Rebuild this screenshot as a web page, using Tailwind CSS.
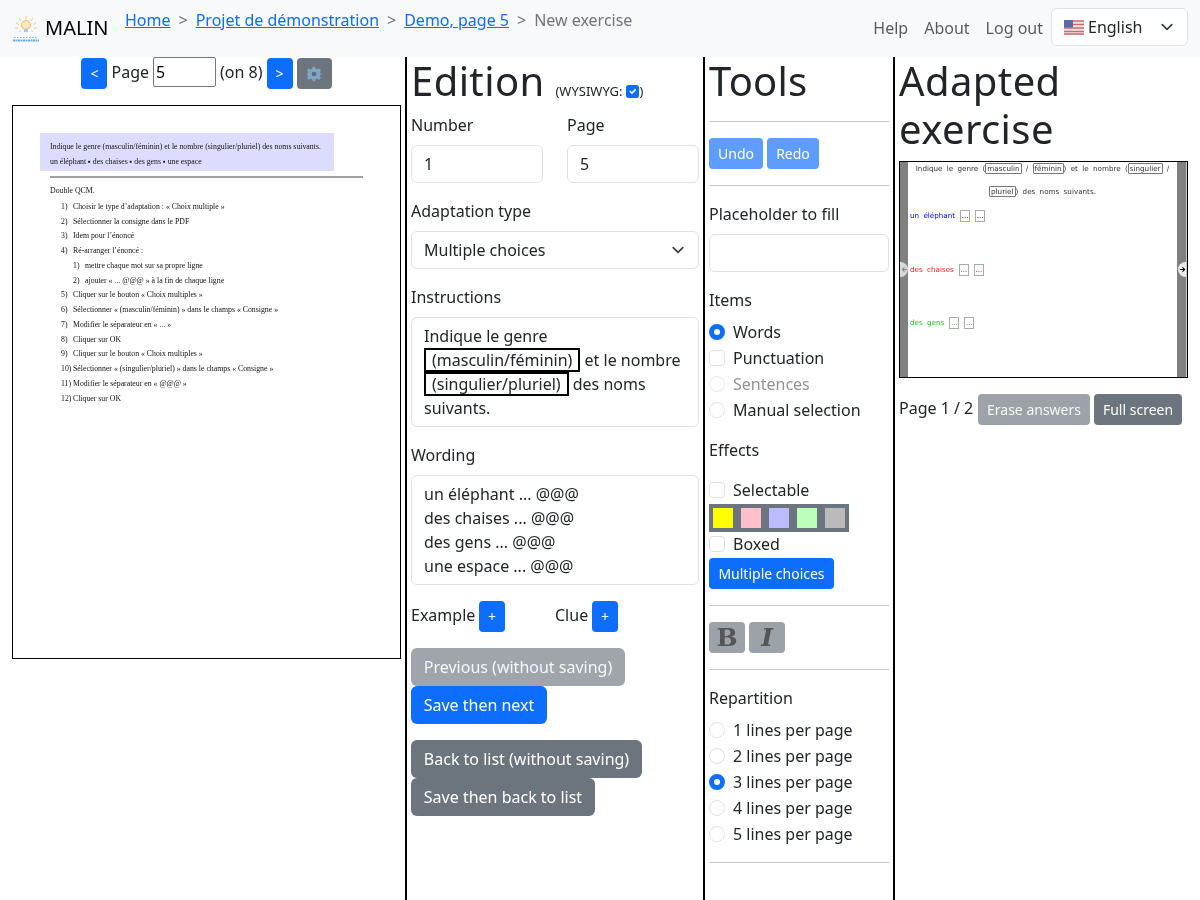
<!DOCTYPE html>
<html lang="en">
<head>
<meta charset="utf-8">
<title>MALIN</title>
<script src="https://cdn.jsdelivr.net/npm/@tailwindcss/browser@4"></script>
</head>
<body class="font-['Noto_Sans',sans-serif] text-[16px] leading-[24px] text-[#212529] bg-white">
<div class="w-[1200px] h-[900px] overflow-hidden flex flex-col will-change-transform">
  <nav class="h-[57px] shrink-0 bg-[#f8f9fa] flex relative">
    <div class="flex items-center pl-[12px] w-[125px] h-[56px]">
      <svg width="28" height="30" viewBox="0 0 28 30" class="mr-[5px] mt-[2px] blur-[0.3px]">
        <g stroke="#f8c684" stroke-width="1"><path d="M14 2v3M7 4l2 3M21 4l-2 3M4 9l3 1.500M24 9l-3 1.500M3 14h3M25 14h-3M7 18l2-1.500M21 18l-2-1.500"/></g>
        <circle cx="14" cy="11" r="4.500" fill="#fde6c2" stroke="#f6b565"/>
        <path d="M12 15h4v3h-4z" fill="#a5cbe6"/>
        <path d="M2 23.500h24" stroke="#7fb2dc" stroke-width="1.200" stroke-dasharray="1.500 1.500"/>
        <path d="M1 26.500h26" stroke="#6aa8de" stroke-width="2" stroke-dasharray="2 .5"/>
      </svg>
      <span class="text-[20px] leading-[30px] text-black">MALIN</span>
    </div>
    <div class="flex pt-[8px] h-[32px]">
      <a class="text-[#0d6efd] underline" href="#">Home</a>
      <span class="px-[8px] text-[#6c757d]">&gt;</span>
      <a class="text-[#0d6efd] underline" href="#">Projet de démonstration</a>
      <span class="px-[8px] text-[#6c757d]">&gt;</span>
      <a class="text-[#0d6efd] underline" href="#">Demo, page 5</a>
      <span class="px-[8px] text-[#6c757d]">&gt;</span>
      <span class="text-[#6c757d]">New exercise</span>
    </div>
    <div class="ml-auto flex items-start h-[56px] pr-[12px] text-black/65">
      <a class="px-[8px] pt-[16px]" href="#">Help</a>
      <a class="px-[8px] pt-[16px]" href="#">About</a>
      <a class="px-[8px] pt-[16px]" href="#">Log out</a>
      <div class="w-[137px] h-[38px] mt-[8px] border border-[#dee2e6] rounded-[6px] bg-white flex items-center pl-[12px] text-[#212529]">
        <svg width="20" height="15" viewBox="0 0 20 15" class="mr-[4px]">
          <rect width="20" height="15" fill="#f0e4e4" rx="1"/>
          <path d="M0 1h20M0 4.500h20M0 8h20M0 11.500h20M0 14h20" stroke="#d0686e" stroke-width="1.500"/>
          <rect width="9" height="7.500" fill="#5a6aa5"/>
        </svg>
        <span>English</span>
        <svg width="16" height="16" viewBox="0 0 16 16" class="ml-auto mr-[12px]"><path d="M2 5l6 6 6-6" fill="none" stroke="#343a40" stroke-width="2" stroke-linecap="round" stroke-linejoin="round" transform="translate(1.600 1.600) scale(.8)"/></svg>
      </div>
    </div>
  </nav>
  <main class="flex flex-1 min-h-0">
    <section class="w-[405px] shrink-0 pl-[12px]">
      <div class="w-[389px] flex justify-center items-start h-[48px]">
        <button class="w-[26px] h-[31px] mt-[1px] rounded-[4px] bg-[#0d6efd] text-white text-[14px] leading-[21px]">&lt;</button>
        <span class="ml-[4px] mt-[3px]">Page</span>
        <div class="w-[63px] h-[30px] ml-[4px] border border-[#767676] rounded-[2px] pl-[2px] leading-[28px] text-black">5</div>
        <span class="ml-[4px] mt-[3px]">(on 8)</span>
        <button class="w-[26px] h-[31px] mt-[1px] ml-[4px] rounded-[4px] bg-[#0d6efd] text-white text-[14px] leading-[21px]">&gt;</button>
        <button class="w-[35px] h-[31px] mt-[1px] ml-[4px] rounded-[4px] bg-[#6c757d] flex items-center justify-center">
          <svg width="16" height="16" viewBox="0 0 24 24"><path fill="#7fa6c4" d="M10 1h4l.6 3.200 2.400 1 2.700-1.800 2.900 2.900L20.800 9l1 2.400L25 12l-3.200.6-1 2.400 1.800 2.700-2.900 2.900-2.700-1.800-2.400 1L14 23h-4l-.6-3.200-2.400-1-2.700 1.800-2.900-2.900L3.200 15l-1-2.400L-1 12l3.200-.6 1-2.400L1.400 6.300l2.900-2.900L7 5.200l2.400-1z"/><circle cx="12" cy="12" r="3.500" fill="#5f6b75"/></svg>
        </button>
      </div>
      <div class="w-[389px] h-[554px] border border-black">
        <div class="font-['Liberation_Serif',serif] text-[7.800px] leading-[14.770px] text-[#111] whitespace-nowrap blur-[0.3px]">
          <div class="ml-[27px] pt-[27px] w-[294px]">
            <div class="h-[38px] bg-[#dcdcff] pl-[10px] pt-[6px] leading-[15px]">
              <div>Indique le genre (masculin/féminin) et le nombre (singulier/pluriel) des noms suivants.</div>
              <div>un éléphant ▪ des chaises ▪ des gens ▪ une espace</div>
            </div>
          </div>
          <div class="ml-[37px] mt-[5px] w-[313px] h-[2px] bg-[#a0a0a0]"></div>
          <div class="ml-[37px] mt-[6px]">Double QCM.</div>
          <ol class="ml-[48px] mt-[1px]">
            <li class="flex"><span class="w-[12px]">1)</span>Choisir le type d’adaptation : « Choix multiple »</li>
            <li class="flex"><span class="w-[12px]">2)</span>Sélectionner la consigne dans le PDF</li>
            <li class="flex"><span class="w-[12px]">3)</span>Idem pour l’énoncé</li>
            <li class="flex"><span class="w-[12px]">4)</span>Ré-arranger l’énoncé :</li>
            <li class="flex ml-[12px]"><span class="w-[12px]">1)</span>mettre chaque mot sur sa propre ligne</li>
            <li class="flex ml-[12px]"><span class="w-[12px]">2)</span>ajouter «  ... @@@ » à la fin de chaque ligne</li>
            <li class="flex"><span class="w-[12px]">5)</span>Cliquer sur le bouton « Choix multiples »</li>
            <li class="flex"><span class="w-[12px]">6)</span>Sélectionner « (masculin/féminin) » dans le champs « Consigne »</li>
            <li class="flex"><span class="w-[12px]">7)</span>Modifier le séparateur en « ...  »</li>
            <li class="flex"><span class="w-[12px]">8)</span>Cliquer sur OK</li>
            <li class="flex"><span class="w-[12px]">9)</span>Cliquer sur le bouton « Choix multiples »</li>
            <li class="flex"><span class="w-[12px]">10)</span>Sélectionner « (singulier/pluriel) » dans le champs « Consigne »</li>
            <li class="flex"><span class="w-[12px]">11)</span>Modifier le séparateur en « @@@ »</li>
            <li class="flex"><span class="w-[12px]">12)</span>Cliquer sur OK</li>
          </ol>
        </div>
      </div>
    </section>

    <section class="w-[300px] shrink-0 border-l-2 border-r-2 border-black pl-[4px] pr-[4px] h-full">
      <h1 class="text-[40px] leading-[48px] whitespace-nowrap tracking-[0.4px]">Edition <span class="text-[13px] leading-[18px] tracking-normal">(WYSIWYG:<span class="inline-flex align-[-1px] ml-[4px] w-[13px] h-[13px] rounded-[2.500px] bg-[#0d6efd] items-center justify-center"><svg width="11" height="11" viewBox="0 0 20 20"><path d="m6 10 3 3 6-6" fill="none" stroke="#fff" stroke-width="3" stroke-linecap="round" stroke-linejoin="round"/></svg></span>)</span></h1>
      <div class="grid grid-cols-[132px_132px] gap-x-[24px] mt-[8px]">
        <div>
          <div class="h-[32px]">Number</div>
          <div class="h-[38px] border border-[#dee2e6] rounded-[6px] px-[12px] py-[6px]">1</div>
        </div>
        <div>
          <div class="h-[32px]">Page</div>
          <div class="h-[38px] border border-[#dee2e6] rounded-[6px] px-[12px] py-[6px]">5</div>
        </div>
      </div>
      <div class="mt-[16px] h-[32px]">Adaptation type</div>
      <div class="h-[38px] border border-[#dee2e6] rounded-[6px] px-[12px] py-[6px] flex items-center justify-between">
        <span>Multiple choices</span>
        <svg width="16" height="16" viewBox="0 0 16 16"><path d="M2 5l6 6 6-6" fill="none" stroke="#343a40" stroke-width="2" stroke-linecap="round" stroke-linejoin="round" transform="translate(1.600 1.600) scale(.8)"/></svg>
      </div>
      <div class="mt-[16px] h-[32px]">Instructions</div>
      <div class="h-[110px] border border-[#dee2e6] rounded-[6px] px-[12px] py-[6px]">
        Indique le genre<br>
        <span class="inline-block h-[24px] border-2 border-black px-[6px] leading-[20px] align-top">(masculin/féminin)</span> et le nombre<br>
        <span class="inline-block h-[24px] border-2 border-black px-[6px] leading-[20px] align-top">(singulier/pluriel)</span> des noms<br>
        suivants.
      </div>
      <div class="mt-[16px] h-[32px]">Wording</div>
      <div class="h-[110px] border border-[#dee2e6] rounded-[6px] px-[12px] py-[6px]">
        un éléphant ... @@@<br>des chaises ... @@@<br>des gens ... @@@<br>une espace ... @@@
      </div>
      <div class="flex items-start mt-[16px] h-[31px]">
        <span class="w-[64px] mt-[2px]">Example</span>
        <button class="ml-[4px] w-[26px] h-[31px] rounded-[4px] bg-[#0d6efd] text-white text-[14px]">+</button>
        <span class="ml-[50px] w-[33px] mt-[2px]">Clue</span>
        <button class="ml-[4px] w-[26px] h-[31px] rounded-[4px] bg-[#0d6efd] text-white text-[14px]">+</button>
      </div>
      <div class="mt-[16px] flex flex-col items-start">
        <button class="h-[38px] w-[214px] rounded-[6px] bg-[#6c757d]/65 text-white/90">Previous (without saving)</button>
        <button class="h-[38px] w-[136px] rounded-[6px] bg-[#0d6efd] text-white">Save then next</button>
        <button class="mt-[16px] h-[38px] w-[231px] rounded-[6px] bg-[#6c757d] text-white">Back to list (without saving)</button>
        <button class="h-[38px] w-[184px] rounded-[6px] bg-[#6c757d] text-white">Save then back to list</button>
      </div>
    </section>

    <section class="w-[190px] shrink-0 border-r-2 border-black pl-[4px] pr-[4px] h-full">
      <h1 class="text-[40px] leading-[48px] tracking-[0.2px]">Tools</h1>
      <hr class="mt-[16px] border-[#c8c8c8]">
      <div class="flex gap-[4px] mt-[16px]">
        <button class="w-[54px] h-[31px] rounded-[4px] bg-[#5c9dfd] text-white text-[14px]">Undo</button>
        <button class="w-[52px] h-[31px] rounded-[4px] bg-[#5c9dfd] text-white text-[14px]">Redo</button>
      </div>
      <hr class="mt-[16px] border-[#c8c8c8]">
      <div class="mt-[16px] h-[32px]">Placeholder to fill</div>
      <div class="h-[38px] border border-[#dee2e6] rounded-[6px]"></div>
      <div class="mt-[16px] h-[31px]">Items</div>
      <div class="flex items-center h-[26px]"><span class="w-[16px] h-[16px] rounded-full border-[5px] border-[#0d6efd] bg-white"></span><span class="ml-[8px]">Words</span></div>
      <div class="flex items-center h-[26px]"><span class="w-[16px] h-[16px] rounded-[4px] border border-[#dee2e6]"></span><span class="ml-[8px]">Punctuation</span></div>
      <div class="flex items-center h-[26px]"><span class="w-[16px] h-[16px] rounded-full border border-[#e9eaec]"></span><span class="ml-[8px] text-[#212529]/50">Sentences</span></div>
      <div class="flex items-center h-[26px]"><span class="w-[16px] h-[16px] rounded-full border border-[#dee2e6]"></span><span class="ml-[8px]">Manual selection</span></div>
      <div class="mt-[15px] h-[32px]">Effects</div>
      <div class="flex items-center h-[26px] mt-[7px]"><span class="w-[16px] h-[16px] rounded-[4px] border border-[#dee2e6]"></span><span class="ml-[8px]">Selectable</span></div>
      <div class="w-[140px] h-[28px] mt-[1px] bg-[#6c757d] flex items-center pl-[4px] gap-[8px]">
        <span class="w-[20px] h-[20px] bg-[#ffff00]"></span>
        <span class="w-[20px] h-[20px] bg-[#ffc0cb]"></span>
        <span class="w-[20px] h-[20px] bg-[#bbbbff]"></span>
        <span class="w-[20px] h-[20px] bg-[#bbffbb]"></span>
        <span class="w-[20px] h-[20px] bg-[#bbbbbb]"></span>
      </div>
      <div class="flex items-center h-[26px] pb-[2px]"><span class="w-[16px] h-[16px] rounded-[4px] border border-[#dee2e6]"></span><span class="ml-[8px]">Boxed</span></div>
      <button class="block w-[125px] h-[31px] rounded-[4px] bg-[#0d6efd] text-white text-[14px]">Multiple choices</button>
      <hr class="mt-[16px] border-[#c8c8c8]">
      <div class="flex gap-[4px] mt-[16px] font-['DejaVu_Serif',serif]">
        <button class="w-[36px] h-[31px] rounded-[4px] bg-[#9da2a8] text-[#555] text-[25px] leading-[31px] font-bold">B</button>
        <button class="w-[36px] h-[31px] rounded-[4px] bg-[#9da2a8] text-[#555] text-[25px] leading-[31px] font-bold italic">I</button>
      </div>
      <hr class="mt-[16px] border-[#c8c8c8]">
      <div class="mt-[16px] h-[31px]">Repartition</div>
      <div class="flex items-center h-[26px]"><span class="w-[16px] h-[16px] rounded-full border border-[#dee2e6]"></span><span class="ml-[8px]">1 lines per page</span></div>
      <div class="flex items-center h-[26px]"><span class="w-[16px] h-[16px] rounded-full border border-[#dee2e6]"></span><span class="ml-[8px]">2 lines per page</span></div>
      <div class="flex items-center h-[26px]"><span class="w-[16px] h-[16px] rounded-full border-[5px] border-[#0d6efd] bg-white"></span><span class="ml-[8px]">3 lines per page</span></div>
      <div class="flex items-center h-[26px]"><span class="w-[16px] h-[16px] rounded-full border border-[#dee2e6]"></span><span class="ml-[8px]">4 lines per page</span></div>
      <div class="flex items-center h-[26px]"><span class="w-[16px] h-[16px] rounded-full border border-[#dee2e6]"></span><span class="ml-[8px]">5 lines per page</span></div>
      <hr class="mt-[15px] border-[#c8c8c8]">
    </section>

    <section class="flex-1 pl-[4px] pr-[12px]">
      <h1 class="text-[40px] leading-[48px] tracking-[0.4px]">Adapted exercise</h1>
      <div class="relative mt-[8px] w-[289px] h-[217px] border border-black flex overflow-hidden">
        <div class="w-[8px] shrink-0 bg-[#808080]"></div>
        <div class="flex-1 min-w-0 text-[7.200px] leading-[12px] text-[#333] font-['DejaVu_Sans',sans-serif] [word-spacing:2px] whitespace-nowrap blur-[0.2px]">
          <div class="text-center mt-[1px] h-[23px] leading-[12px]">Indique le genre (<span class="border border-[#777] rounded-[1px] px-[1px]">masculin</span> / <span class="border border-[#777] rounded-[1px] px-[1px]">féminin</span>) et le nombre (<span class="border border-[#777] rounded-[1px] px-[1px]">singulier</span> /</div>
          <div class="text-center h-[23px]"><span class="border border-[#777] rounded-[1px] px-[1px]">pluriel</span>) des noms suivants.</div>
          <div class="pl-[2px] flex items-center gap-[5px] text-[#0000ff] h-[14px]">un éléphant <span class="inline-block w-[10px] h-[12px] leading-[10px] border border-[#aaa] text-center">...</span><span class="inline-block w-[10px] h-[12px] leading-[10px] border border-[#aaa] text-center">...</span></div>
          <div class="pl-[2px] mt-[39.500px] flex items-center gap-[5px] text-[#ff2020] h-[14px]">des chaises <span class="inline-block w-[10px] h-[12px] leading-[10px] border border-[#aaa] text-center">...</span><span class="inline-block w-[10px] h-[12px] leading-[10px] border border-[#aaa] text-center">...</span></div>
          <div class="pl-[2px] mt-[39.500px] flex items-center gap-[5px] text-[#20cc20] h-[14px]">des gens <span class="inline-block w-[10px] h-[12px] leading-[10px] border border-[#aaa] text-center">...</span><span class="inline-block w-[10px] h-[12px] leading-[10px] border border-[#aaa] text-center">...</span></div>
        </div>
        <div class="w-[10px] shrink-0 bg-[#808080] border-r border-[#ccc]"></div>
        <div class="absolute left-0 top-[100px] w-[8px] h-[15px] rounded-r-full bg-[#d8d8d8] flex items-center justify-center">
          <svg width="7" height="7" viewBox="0 0 8 8"><path d="M7 4H1.500M4 1.500 1.500 4 4 6.500" fill="none" stroke="#888" stroke-width="1.200"/></svg>
        </div>
        <div class="absolute right-[1px] top-[100px] w-[8px] h-[15px] rounded-l-full bg-[#e8e8e8] flex items-center justify-center">
          <svg width="7" height="7" viewBox="0 0 8 8"><path d="M1 4h5.500M4 1.500 6.500 4 4 6.500" fill="none" stroke="#000" stroke-width="1.200"/></svg>
        </div>
      </div>
      <div class="flex items-start mt-[16px] whitespace-nowrap">
        <span class="w-[75px] mt-[2px]">Page 1 / 2</span>
        <button class="ml-[4px] w-[112px] h-[31px] rounded-[4px] bg-[#9da2a8] text-white/90 text-[14px]">Erase answers</button>
        <button class="ml-[4px] w-[88px] h-[31px] rounded-[4px] bg-[#6c757d] text-white text-[14px]">Full screen</button>
      </div>
    </section>
  </main>
</div>
</body>
</html>
